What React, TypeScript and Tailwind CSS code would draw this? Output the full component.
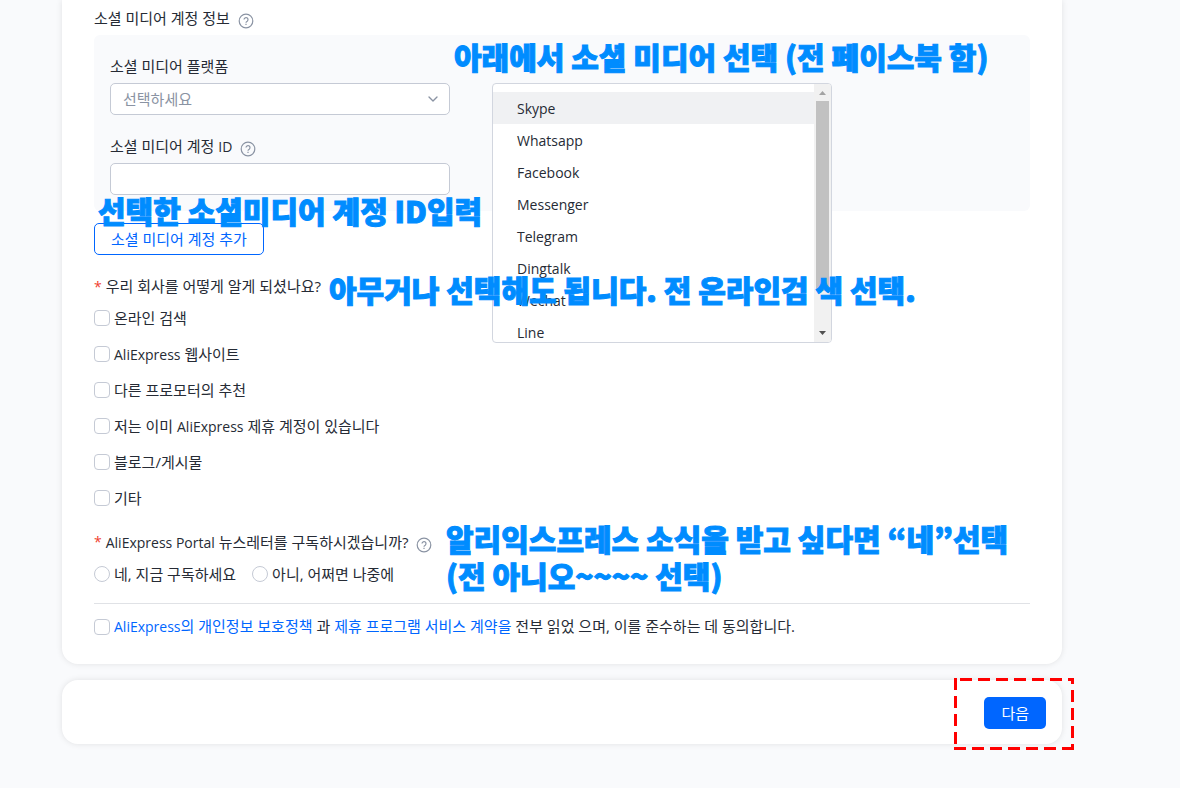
import type { ReactNode } from "react";
import { ChevronDown } from "lucide-react";

const SOURCES: ReactNode[] = [
  "온라인 검색",
  <>
    <Latin>AliExpress</Latin> 웹사이트
  </>,
  "다른 프로모터의 추천",
  <>
    저는 이미 <Latin>AliExpress</Latin> 제휴 계정이 있습니다
  </>,
  "블로그/게시물",
  "기타",
];

const PLATFORMS = [
  "Skype",
  "Whatsapp",
  "Facebook",
  "Messenger",
  "Telegram",
  "Dingtalk",
  "Wechat",
  "Line",
];

function Latin({ children }: { children: ReactNode }) {
  return <span className="text-sm">{children}</span>;
}

function HelpIcon() {
  return (
    <svg
      viewBox="0 0 16 16"
      className="mt-[5px] h-4 w-4 shrink-0 text-[#8a93a3]"
      fill="none"
      stroke="currentColor"
      strokeWidth="1.2"
      aria-hidden="true"
    >
      <circle cx="8" cy="8" r="6.8" />
      <path d="M6 6.6a2 2 0 1 1 3.2 1.6C8.4 8.7 8 9 8 9.8" />
      <path d="M8 10.7v1.3" />
    </svg>
  );
}

function Required() {
  return <span className="mr-1 text-sm text-[#f0402f]">*</span>;
}

/* Heavy guide text laid over the form */
function Note({ className, children }: { className: string; children: ReactNode }) {
  return (
    <p
      className={`pointer-events-none absolute z-20 whitespace-nowrap font-['Noto_Sans_CJK_KR',sans-serif] text-[30px] leading-[37px] font-black text-[#008cff] [-webkit-text-stroke:1px_#008cff] ${className}`}
    >
      {children}
    </p>
  );
}

function PlatformMenu() {
  return (
    <div className="absolute top-[83px] left-[430px] z-10 flex h-[260px] w-[340px] overflow-hidden rounded-[4px] border border-[#d2d6df] bg-white">
      <ul role="listbox" aria-label="소셜 미디어 플랫폼" className="flex-1 overflow-hidden pt-2">
        {PLATFORMS.map((name, i) => (
          <li
            key={name}
            role="option"
            aria-selected={i === 0}
            className={`h-8 pt-px pl-6 text-sm leading-8 ${i === 0 ? "bg-[#f0f1f3]" : ""}`}
          >
            {name}
          </li>
        ))}
      </ul>
      <div className="flex w-[17px] flex-col items-center bg-[#f1f1f1]">
        <svg viewBox="0 0 17 17" className="h-[17px] w-[17px]" aria-hidden="true">
          <path d="M5 11h7L8.5 7z" fill="#a3a3a3" />
        </svg>
        <div className="h-[190px] w-[13px] bg-[#c1c1c1]" />
        <svg viewBox="0 0 17 17" className="mt-auto h-[17px] w-[17px]" aria-hidden="true">
          <path d="M5 6h7l-3.500 4z" fill="#505050" />
        </svg>
      </div>
    </div>
  );
}

function NextHighlight() {
  return (
    <svg
      viewBox="0 0 120 72"
      className="pointer-events-none absolute -top-[2px] -right-3 z-20 h-[72px] w-[120px]"
      stroke="#ff0000"
      strokeWidth="3"
      strokeDasharray="12 6"
      aria-hidden="true"
    >
      <path d="M6 1.500H120" />
      <path d="M118.500 0V72" strokeDashoffset="6" />
      <path d="M0 70.500H120" />
      <path d="M1.500 0V68" />
    </svg>
  );
}

const box =
  "h-4 w-4 shrink-0 appearance-none border border-[#c5cad5] bg-white checked:bg-[#0066ff]";
const field = "h-8 w-full rounded-[5px] border border-[#c5cad5] bg-white px-3 text-[15px]";

export default function App() {
  return (
    <div className="min-h-screen bg-[#f9fafc] pr-[118px] pl-[62px] font-['Open_Sans','Noto_Sans_CJK_KR',sans-serif] text-[15px] leading-5 text-[#262b35]">
      <main className="relative rounded-b-2xl bg-white px-8 pt-2 pb-[27px] shadow-[0_0_6px_rgba(0,0,0,0.1)]">
        <div className="flex h-[27px] items-start gap-2">
          <h2>소셜 미디어 계정 정보</h2>
          <HelpIcon />
        </div>

        <section className="rounded-md bg-[#f9fafc] px-4 pt-[21px] pb-4">
          <div className="w-[340px]">
            <label htmlFor="platform" className="mb-[7px] block h-5">
              소셜 미디어 플랫폼
            </label>
            <div className="relative">
              <select
                id="platform"
                defaultValue=""
                className={`${field} appearance-none text-[#8a93a3]`}
              >
                <option value="">선택하세요</option>
                {PLATFORMS.map((name) => (
                  <option key={name}>{name}</option>
                ))}
              </select>
              <ChevronDown
                className="pointer-events-none absolute top-2 right-[9px] h-4 w-4 text-[#8a93a3]"
                strokeWidth={2}
              />
            </div>
            <div className="mt-[21px] mb-[7px] flex h-5 items-start gap-2">
              <label htmlFor="account">
                소셜 미디어 계정 <Latin>ID</Latin>
              </label>
              <HelpIcon />
            </div>
            <input id="account" type="text" className={field} />
          </div>
        </section>

        <button
          type="button"
          className="mt-3 h-8 rounded-[5px] border border-[#0066ff] bg-white px-4 text-[#0066ff]"
        >
          소셜 미디어 계정 추가
        </button>

        <fieldset className="mt-[21px]">
          <legend className="mb-[11px]">
            <Required />
            우리 회사를 어떻게 알게 되셨나요?
          </legend>
          <div className="flex flex-col items-start gap-4">
            {SOURCES.map((label, i) => (
              <label key={i} className="flex h-5 items-center gap-1">
                <input type="checkbox" className={`${box} rounded-[4px]`} />
                <span>{label}</span>
              </label>
            ))}
          </div>
        </fieldset>

        <fieldset className="mt-6">
          <legend className="mb-3 flex h-5 items-start">
            <Required />
            <span className="mr-2">
              <Latin>AliExpress Portal</Latin> 뉴스레터를 구독하시겠습니까?
            </span>
            <HelpIcon />
          </legend>
          <div className="flex items-center gap-4">
            <label className="flex items-center gap-1">
              <input type="radio" name="newsletter" className={`${box} rounded-full`} />
              네, 지금 구독하세요
            </label>
            <label className="flex items-center gap-1">
              <input type="radio" name="newsletter" className={`${box} rounded-full`} />
              아니, 어쩌면 나중에
            </label>
          </div>
        </fieldset>

        <hr className="mt-[19px] mb-3 border-[#e0e2e6]" />

        <div className="flex items-center gap-1">
          <input id="agree" type="checkbox" className={`${box} rounded-[4px]`} />
          <label htmlFor="agree">
            <a href="#privacy" className="text-[#0066ff]">
              <Latin>AliExpress</Latin>의 개인정보 보호정책
            </a>{" "}
            과{" "}
            <a href="#terms" className="text-[#0066ff]">
              제휴 프로그램 서비스 계약을
            </a>{" "}
            전부 읽었 으며, 이를 준수하는 데 동의합니다.
          </label>
        </div>

        <PlatformMenu />
        <Note className="top-[38px] left-[392px]">아래에서 소셜 미디어 선택 (전 페이스북 함)</Note>
        <Note className="top-[192px] left-9">선택한 소셜미디어 계정 ID입력</Note>
        <Note className="top-[271px] left-[267px]">
          아무거나 선택해도 됩니다. 전 온라인검 색 선택.
        </Note>
        <Note className="top-[520px] left-[384px]">
          알리익스프레스 소식을 받고 싶다면 “네”선택
          <br />
          (전 아니오~~~~ 선택)
        </Note>
      </main>

      <footer className="relative mt-4 flex h-16 items-center justify-end rounded-2xl bg-white px-4 pt-0.5 shadow-[0_0_6px_rgba(0,0,0,0.1)]">
        <button type="button" className="h-8 rounded-[5px] bg-[#0066ff] px-[17px] text-white">
          다음
        </button>
        <NextHighlight />
      </footer>
    </div>
  );
}
